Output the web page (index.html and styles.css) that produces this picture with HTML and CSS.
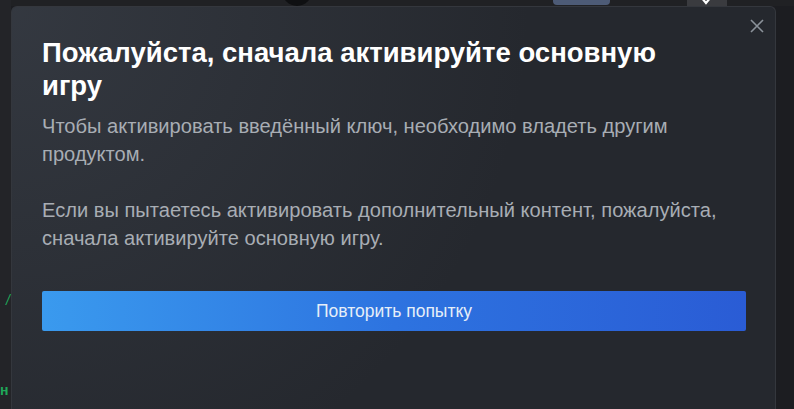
FILE: index.html
```html
<!DOCTYPE html>
<html lang="ru">
<head>
    <meta charset="UTF-8">
    <meta name="viewport" content="width=device-width, initial-scale=1.0">
    <title>Активация продукта</title>
    <link rel="stylesheet" href="styles.css">
</head>
<body>
    <div class="page-behind">
        <span class="avatar"></span>
        <span class="tab"></span>
        <span class="win-btn">
            <svg width="14" height="6" viewBox="0 0 14 6"><path d="M2 -3 L7 3 L12 -3" stroke="#ffffff" stroke-width="2.2" fill="none"/></svg>
        </span>
    </div>
    <div class="backdrop">
        <div class="behind-left">
            <span class="green-mark first">/</span>
            <span class="green-mark second">н</span>
        </div>
        <div class="dialog">
            <button class="close" aria-label="Закрыть">
                <svg width="14" height="14" viewBox="0 0 14 14">
                    <path d="M1 1 L13 13 M13 1 L1 13" stroke="#8b929a" stroke-width="1.6" fill="none"/>
                </svg>
            </button>
            <h1>Пожалуйста, сначала активируйте основную игру</h1>
            <p class="message">Чтобы активировать введённый ключ, необходимо владеть другим продуктом.<br><br>Если вы пытаетесь активировать дополнительный контент, пожалуйста, сначала активируйте основную игру.</p>
            <button class="retry">Повторить попытку</button>
        </div>
    </div>
</body>
</html>
```

FILE: styles.css
```css
body {
    position: relative;
    margin: 0;
    background-color: #1c1d21;
    font-family: Arial, "Liberation Sans", sans-serif;
    overflow: hidden;
}
.page-behind {
    position: absolute;
    top: 0;
    left: 0;
    right: 0;
    height: 6px;
    background: #202124;
}
.avatar {
    position: absolute;
    left: 282px;
    top: -24px;
    width: 30px;
    height: 30px;
    border-radius: 50%;
    background: #0f1012;
}
.tab {
    position: absolute;
    left: 553px;
    top: 0;
    width: 57px;
    height: 5px;
    border-radius: 0 0 4px 4px;
    background: #4d5b76;
}
.win-btn {
    position: absolute;
    left: 687px;
    top: 0;
    width: 40px;
    height: 6px;
    background: #3a3b3f;
}
.win-btn svg {
    position: absolute;
    left: 12px;
    top: 0;
}
.backdrop {
    display: flex;
    height: 409px;
}
.behind-left {
    position: relative;
    width: 11px;
    background: #232428;
}
.green-mark {
    position: absolute;
    left: 6px;
    color: #1fa85a;
    font-size: 14px;
    font-style: italic;
}
.green-mark.first {
    top: 292px;
}
.green-mark.second {
    top: 382px;
    left: 0;
    font-style: normal;
    font-weight: bold;
}
.dialog {
    position: relative;
    margin-top: 6px;
    width: 704px;
    padding: 29px 29px 0 30px;
    border-radius: 6px 6px 0 0;
    border: 1px solid #34373d;
    border-bottom: none;
    background: radial-gradient(circle at top left, rgba(74, 81, 92, 0.4) 0%, rgba(75, 81, 92, 0) 60%), #25282e;
}
.close {
    position: absolute;
    top: 11px;
    right: 10px;
    width: 16px;
    height: 16px;
    padding: 1px;
    border: none;
    background: none;
    cursor: pointer;
}
h1 {
    margin: 0 60px 0 0;
    color: #ffffff;
    font-size: 27.5px;
    line-height: 33px;
    font-weight: bold;
}
.message {
    margin: 10px 0 0;
    color: #a8adb4;
    font-size: 20.1px;
    line-height: 28px;
}
.retry {
    display: block;
    width: 100%;
    height: 40px;
    margin-top: 39px;
    border: none;
    border-radius: 2px;
    background: linear-gradient(to right, #3a9aee 0%, #2d73e0 50%, #2a5cd5 100%);
    color: #e6eef8;
    font-family: Arial, "Liberation Sans", sans-serif;
    font-size: 17.5px;
    cursor: pointer;
}
```
